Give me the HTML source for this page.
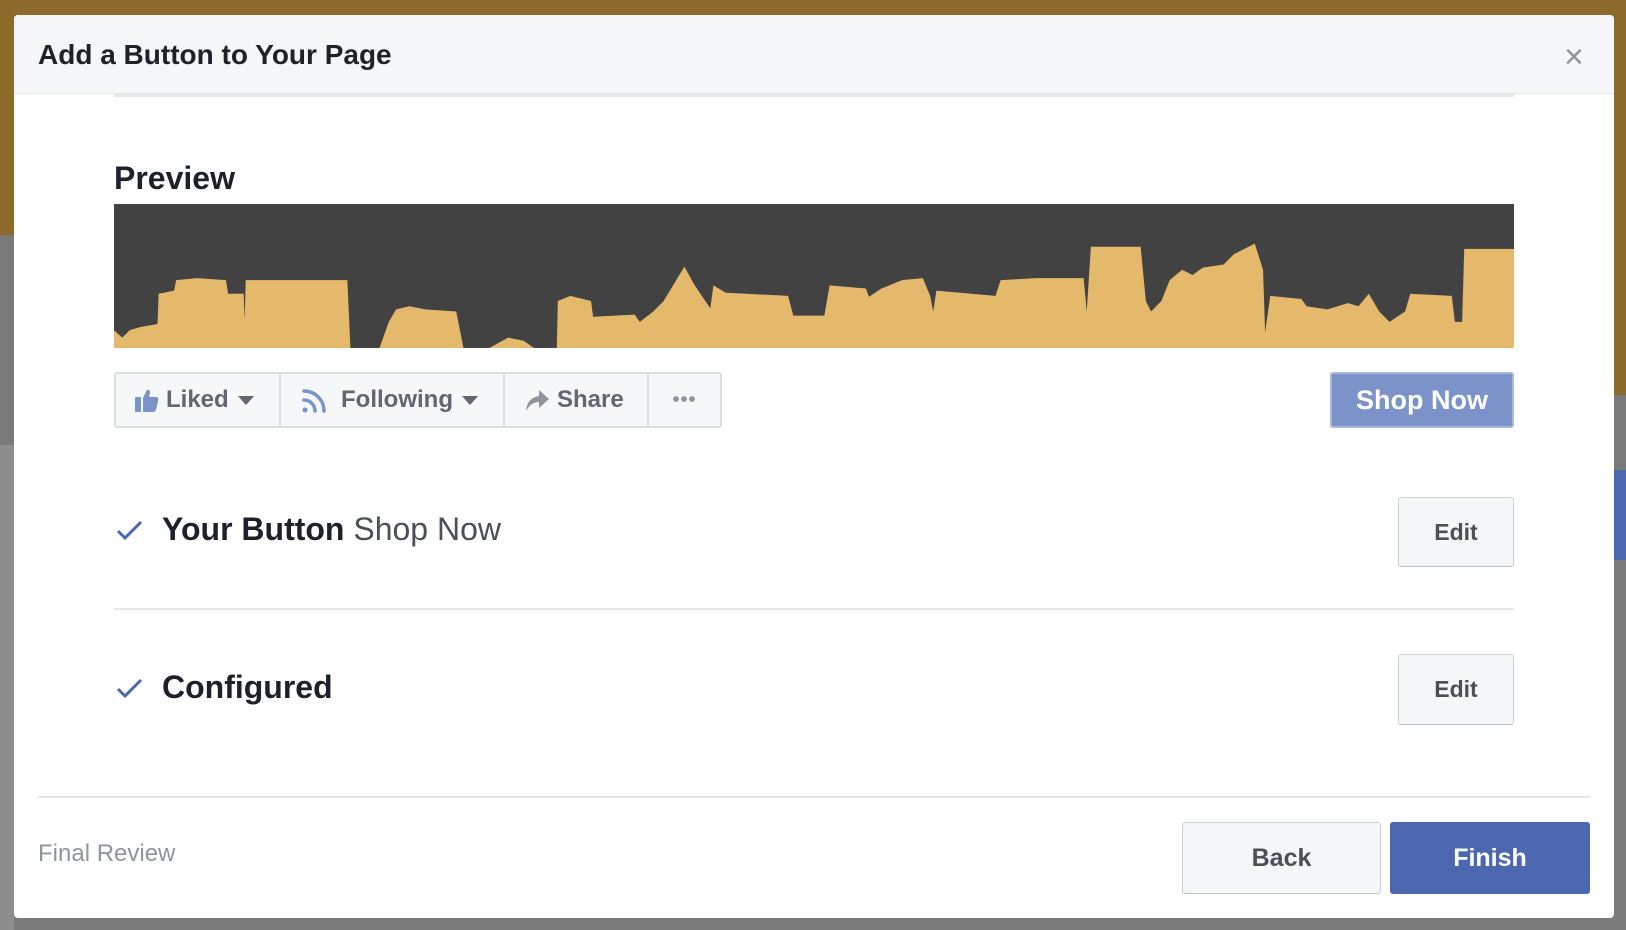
<!DOCTYPE html>
<html><head><meta charset="utf-8"><style>
*{box-sizing:border-box;margin:0;padding:0}
body{width:1626px;height:930px;overflow:hidden;position:relative;background:#7a7a7a;font-family:"Liberation Sans",sans-serif}
.abs{position:absolute}
.modal{left:14px;top:15px;width:1600px;height:903px;background:#fff;border-radius:4px;overflow:hidden}
.hdr{left:0;top:0;width:1600px;height:79px;background:#f5f6f7;border-bottom:1px solid #e5e5e5}
.btn{border:1px solid #ccd0d5;border-bottom-color:#bec3c9;background:#f5f6f7;border-radius:3px;color:#4b4f56;font-weight:bold;display:flex;align-items:center;justify-content:center}
.grp{left:100px;top:357px;width:608px;height:56px;border:2px solid #dadde1;border-radius:3px;background:#f6f7f9;display:flex;color:#606770;font-weight:bold;font-size:24px}
.grp>div{height:100%;display:flex;align-items:center;border-right:2px solid #dadde1}
.grp>div:last-child{border-right:none}
</style></head><body>
<div class="abs" style="left:0;top:0;width:1626px;height:16px;background:#8b6a2b"></div>
<div class="abs" style="left:0;top:0;width:14px;height:235px;background:#8b6a2b"></div>
<div class="abs" style="left:1614px;top:0;width:12px;height:395px;background:#8b6a2b"></div>
<div class="abs" style="left:1614px;top:470px;width:12px;height:90px;background:#4b67b0"></div>
<div class="abs" style="left:0;top:445px;width:14px;height:485px;background:#8e8e8e"></div>
<div class="abs modal">
 <div class="abs hdr"></div>
 <div class="abs" style="left:24px;top:24px;font-size:28px;font-weight:bold;color:#1d2129">Add a Button to Your Page</div>
 <div class="abs" style="left:1550px;top:24px;font-size:34px;color:#90949c;line-height:36px">×</div>
 <div class="abs" style="left:100px;top:79px;width:1400px;height:3px;background:#e5e6e9"></div>
 <div class="abs" style="left:100px;top:145px;font-size:32px;font-weight:bold;color:#1d2129">Preview</div>
 <svg class="abs" style="left:100px;top:189px" width="1400" height="144" viewBox="110 197 1350 138" preserveAspectRatio="none">
  <rect x="110" y="197" width="1350" height="138" fill="#424242"/>
  <polygon fill="#e4b96c" points="110,335 110,318 118,325 125,318 135,315 152,312 153,283 168,280 170,270 190,268 218,270 220,283 235,283 236,308 237,270 335,270 338,335 366,335 375,310 382,298 395,295 410,298 440,300 447,335 472,335 490,325 505,328 515,335 537,335 538,290 550,285 570,290 572,305 612,303 617,310 630,300 640,290 660,257 670,275 685,297 688,275 700,282 760,285 765,304 795,304 800,275 835,278 838,286 850,278 870,270 890,268 897,285 900,300 903,280 960,285 965,270 1000,268 1045,268 1048,300 1052,238 1100,238 1105,290 1110,300 1120,290 1128,270 1140,260 1150,265 1160,258 1180,255 1190,245 1210,235 1218,260 1220,320 1225,285 1255,288 1260,295 1280,298 1300,292 1310,295 1320,283 1330,300 1340,310 1355,300 1360,283 1400,285 1403,310 1410,310 1412,240 1460,240 1460,335"/>
 </svg>
 <div class="abs grp">
  <div style="width:165px;padding-left:18px">
   <svg width="26" height="26" viewBox="0 0 26 26"><rect x="1" y="10" width="6" height="15" rx="1" fill="#7b93c8"/><path d="M9 11 L13 3 Q16 2 16 6 L15 10 L23 10 Q25 11 24 14 L22 23 Q21 25 19 25 L9 25 Z" fill="#7b93c8"/></svg>
   <span style="margin-left:6px">Liked</span>
   <svg style="margin-left:9px" width="16" height="10"><path d="M0 1 L16 1 L8 10Z" fill="#606770"/></svg>
  </div>
  <div style="width:224px;padding-left:20px">
   <svg width="28" height="28" viewBox="0 0 28 28" fill="none" stroke="#7b93c8" stroke-width="3.5" stroke-linecap="round"><circle cx="4" cy="24" r="2.5" fill="#7b93c8" stroke="none"/><path d="M3 14 A11 11 0 0 1 14 25"/><path d="M3 5 A20 20 0 0 1 23 25"/></svg>
   <span style="margin-left:12px">Following</span>
   <svg style="margin-left:9px" width="16" height="10"><path d="M0 1 L16 1 L8 10Z" fill="#606770"/></svg>
  </div>
  <div style="width:144px;padding-left:20px">
   <svg width="25" height="24" viewBox="0 0 25 24"><path d="M1 23 Q2 10 14 8 L14 2 L24 11 L14 20 L14 14 Q6 14 1 23Z" fill="#90949c"/></svg>
   <span style="margin-left:7px">Share</span>
  </div>
  <div style="flex:1;justify-content:center;font-size:20px;letter-spacing:1px;color:#90949c">•••</div>
 </div>
 <div class="abs" style="left:1316px;top:357px;width:184px;height:56px;background:#7b93c8;border:2px solid #a8b8df;border-radius:3px;color:#fff;font-weight:bold;font-size:27px;display:flex;align-items:center;justify-content:center">Shop Now</div>
 <svg class="abs" style="left:102px;top:504px" width="28" height="22"><path d="M2 12 L9 19 L25 3" stroke="#4b67b0" stroke-width="3" fill="none"/></svg>
 <div class="abs" style="left:148px;top:496px;font-size:32px;color:#1d2129"><b>Your Button</b> <span style="color:#4b4f56">Shop Now</span></div>
 <div class="abs btn" style="left:1384px;top:482px;width:116px;height:70px;font-size:23px">Edit</div>
 <div class="abs" style="left:100px;top:593px;width:1400px;height:2px;background:#e5e6e9"></div>
 <svg class="abs" style="left:102px;top:662px" width="28" height="22"><path d="M2 12 L9 19 L25 3" stroke="#4b67b0" stroke-width="3" fill="none"/></svg>
 <div class="abs" style="left:148px;top:654px;font-size:32px;font-weight:bold;color:#1d2129">Configured</div>
 <div class="abs btn" style="left:1384px;top:639px;width:116px;height:71px;font-size:23px">Edit</div>
 <div class="abs" style="left:24px;top:781px;width:1552px;height:2px;background:#e5e6e9"></div>
 <div class="abs" style="left:24px;top:825px;font-size:24px;color:#90949c">Final Review</div>
 <div class="abs btn" style="left:1168px;top:807px;width:199px;height:72px;font-size:25px">Back</div>
 <div class="abs" style="left:1376px;top:807px;width:200px;height:72px;background:#4b67b0;border-radius:3px;color:#fff;font-weight:bold;font-size:25px;display:flex;align-items:center;justify-content:center">Finish</div>
</div>
</body></html>
